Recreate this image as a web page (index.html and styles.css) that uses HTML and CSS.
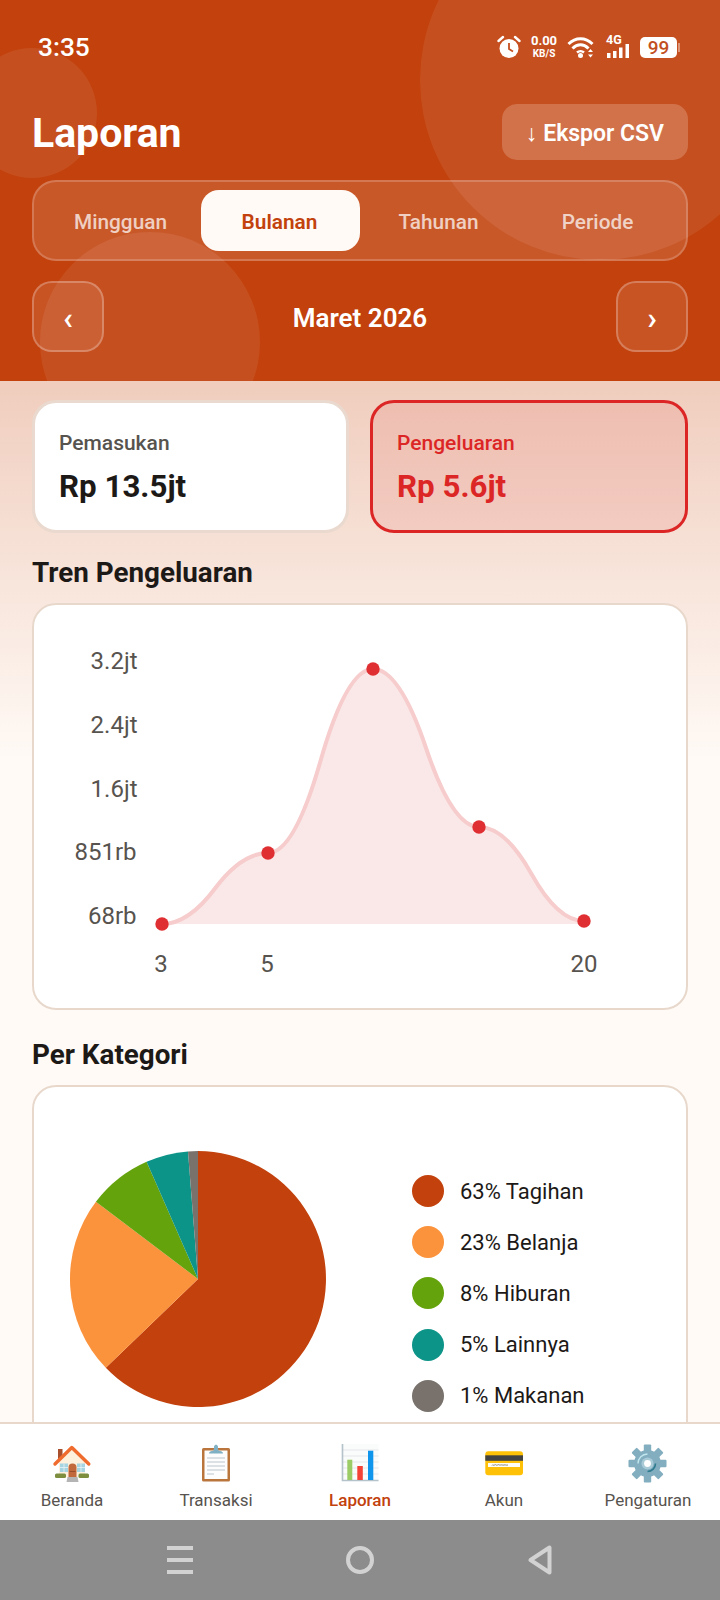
FILE: index.html
```html
<!DOCTYPE html>
<html lang="id">
<head>
    <meta charset="UTF-8">
    <meta name="viewport" content="width=device-width, initial-scale=1.0">
    <title>Laporan</title>
    <link rel="stylesheet" href="styles.css">
</head>
<body>
<div class="app">
    <!-- Header -->
    <header class="header">
        <span class="bubble bubble-big"></span>
        <span class="bubble bubble-left"></span>
        <span class="bubble bubble-low"></span>

        <div class="status">
            <span class="clock">3:35</span>
            <div class="status-icons">
                <svg class="ic-alarm" width="24" height="24" viewBox="0 0 24 24">
                    <circle cx="12" cy="13.5" r="9.5" fill="#fff"/>
                    <path d="M12 8v6l4 2.5" fill="none" stroke="#c64f1f" stroke-width="1.8"/>
                    <path d="M1.5 6 6 2M22.5 6 18 2" stroke="#fff" stroke-width="2.4" stroke-linecap="round"/>
                </svg>
                <div class="speed"><b>0.00</b><small>KB/S</small></div>
                <svg width="29" height="22" viewBox="0 0 29 22">
                    <path d="M1.5 8C8.5 1 18.5 1 25.500 8" fill="none" stroke="#fff" stroke-width="3"/>
                    <path d="M5.500 12.500C10.500 7.500 16.500 7.500 21.500 12.500" fill="none" stroke="#fff" stroke-width="3"/>
                    <path d="M10 16.500C12 14.800 15 14.800 17 16.500" fill="none" stroke="#fff" stroke-width="2.600"/>
                    <circle cx="13.500" cy="19.500" r="2.500" fill="#fff"/>
                    <path d="M23.500 13l2.500 3h-5zM23.500 21.500l-2.500-3h5z" fill="#fff"/>
                </svg>
                <div class="signal">
                    <span class="signal-net">4G</span>
                    <svg width="24" height="14" viewBox="0 0 24 14">
                        <rect x="1" y="9" width="3.500" height="5" fill="#fff"/>
                        <rect x="7" y="7" width="3.500" height="7" fill="#fff"/>
                        <rect x="13" y="3.500" width="3.500" height="10.500" fill="#fff"/>
                        <rect x="19.500" y="0" width="3.500" height="14" fill="#fff"/>
                    </svg>
                </div>
                <div class="battery"><span class="battery-level">99</span><i class="battery-nub"></i></div>
            </div>
        </div>

        <div class="title-row">
            <h1 class="title">Laporan</h1>
            <button class="export">↓ Ekspor CSV</button>
        </div>

        <div class="tabs">
            <span class="tab">Mingguan</span>
            <span class="tab active">Bulanan</span>
            <span class="tab">Tahunan</span>
            <span class="tab">Periode</span>
        </div>

        <div class="month-row">
            <button class="month-btn">‹</button>
            <span class="month">Maret 2026</span>
            <button class="month-btn">›</button>
        </div>
    </header>

    <!-- Isi laporan -->
    <main class="content">
        <div class="summary">
            <div class="sum-card">
                <div class="sum-label">Pemasukan</div>
                <div class="sum-value">Rp 13.5jt</div>
            </div>
            <div class="sum-card expense">
                <div class="sum-label">Pengeluaran</div>
                <div class="sum-value">Rp 5.6jt</div>
            </div>
        </div>

        <h2 class="section-title">Tren Pengeluaran</h2>
        <div class="panel panel-chart">
            <svg class="chart" width="652" height="403" viewBox="34 605 652 403">
                <path d="M162 924Q188.500 924 215 888.500Q241.500 853 268 853Q294.250 853 320.500 761Q346.750 669 373 669Q399.500 669 426 748Q452.500 827 479 827Q505.250 827 531.500 874Q557.750 921 584 921V924Z" fill="#fae8e8"/>
                <path d="M162 924Q188.500 924 215 888.500Q241.500 853 268 853Q294.250 853 320.500 761Q346.750 669 373 669Q399.500 669 426 748Q452.500 827 479 827Q505.250 827 531.500 874Q557.750 921 584 921" fill="none" stroke="#f6cccc" stroke-width="4"/>
                <g fill="#e02f33">
                    <circle cx="162" cy="924" r="6.700"/>
                    <circle cx="268" cy="853" r="6.700"/>
                    <circle cx="373" cy="669" r="6.700"/>
                    <circle cx="479" cy="827" r="6.700"/>
                    <circle cx="584" cy="921" r="6.700"/>
                </g>
                <g class="axis-y">
                    <text x="137.500" y="669">3.2jt</text>
                    <text x="137.500" y="733">2.4jt</text>
                    <text x="137.500" y="797">1.6jt</text>
                    <text x="136.500" y="860">851rb</text>
                    <text x="136.500" y="924">68rb</text>
                </g>
                <g class="axis-x">
                    <text x="161" y="972">3</text>
                    <text x="267" y="972">5</text>
                    <text x="584" y="972">20</text>
                </g>
            </svg>
        </div>

        <h2 class="section-title section-title-2">Per Kategori</h2>
        <div class="panel panel-pie">
            <svg class="pie" width="256" height="256" viewBox="70 1151 256 256">
                <path d="M198 1279V1151A128 128 0 1 1 105.800 1367.800Z" fill="#c2410c"/>
                <path d="M198 1279L105.800 1367.800A128 128 0 0 1 95.900 1201.800Z" fill="#fb923c"/>
                <path d="M198 1279L95.900 1201.800A128 128 0 0 1 146.600 1161.800Z" fill="#65a30d"/>
                <path d="M198 1279L146.600 1161.800A128 128 0 0 1 188 1151.400Z" fill="#0d9488"/>
                <path d="M198 1279L188 1151.400A128 128 0 0 1 198 1151Z" fill="#78716c"/>
            </svg>
            <ul class="legend">
                <li class="legend-row"><span class="dot dot-tagihan"></span>63% Tagihan</li>
                <li class="legend-row"><span class="dot dot-belanja"></span>23% Belanja</li>
                <li class="legend-row"><span class="dot dot-hiburan"></span>8% Hiburan</li>
                <li class="legend-row"><span class="dot dot-lainnya"></span>5% Lainnya</li>
                <li class="legend-row"><span class="dot dot-makanan"></span>1% Makanan</li>
            </ul>
        </div>
    </main>

    <!-- Navigasi bawah -->
    <nav class="bottom-nav">
        <div class="nav-item">
            <svg width="40" height="40" viewBox="0 0 40 40">
                <rect x="6" y="5" width="4.500" height="12" fill="#a8502e"/>
                <path d="M7 17 20 4l13 13v16H7z" fill="#fdf0dc"/>
                <path d="M3 20 19.800 3.500 36.800 20" fill="none" stroke="#ef6c2e" stroke-width="3.400" stroke-linecap="round" stroke-linejoin="round"/>
                <rect x="8" y="19.500" width="8" height="8.500" fill="#a6d4e0"/>
                <rect x="25" y="19.500" width="8" height="8.500" fill="#a6d4e0"/>
                <path d="M12 19.500v8.500M8 23.500h8M29 19.500v8.500M25 23.500h8" stroke="#e8f4f6" stroke-width="0.800"/>
                <path d="M16.500 33V23.500a4 4 0 0 1 8 0V33z" fill="#c1693c"/>
                <path d="M17.500 27.500h6" stroke="#8f4524" stroke-width="0.800"/>
                <rect x="3" y="29.500" width="11" height="4.500" rx="1.500" fill="#7d8f3f"/>
                <rect x="26.500" y="29.500" width="10.500" height="4.500" rx="1.500" fill="#7d8f3f"/>
                <path d="M15.500 33h10l1 5H14.500z" fill="#b4b4b4"/>
            </svg>
            <span class="nav-label">Beranda</span>
        </div>
        <div class="nav-item">
            <svg width="40" height="40" viewBox="0 0 40 40">
                <rect x="6" y="4" width="28" height="33.500" rx="1.500" fill="#b9753c"/>
                <rect x="8.500" y="6.500" width="23" height="28.500" fill="#fdfdfd"/>
                <path d="M13 9.500c0-2 2-2.500 4.500-2.800C17.800 5 18.800 0.500 20 0.500s2.200 4.500 2.500 6.200C25 7 27 7.500 27 9.500z" fill="#7fb0c4"/>
                <circle cx="20" cy="3" r="2" fill="#7fb0c4"/>
                <path d="M11 14h18M11 18h18M11 22h18M11 26h18M11 30h7" stroke="#cfd8dc" stroke-width="1.300"/>
            </svg>
            <span class="nav-label">Transaksi</span>
        </div>
        <div class="nav-item active">
            <svg width="40" height="40" viewBox="0 0 40 40">
                <rect x="1.500" y="0" width="37" height="37" fill="#fafbfb"/>
                <path d="M3 6h35.500M3 12h35.500M3 18h35.500M3 24h35.500M3 30h35.500" stroke="#e3e8ea" stroke-width="1.200"/>
                <path d="M2.500 0v36.500h36" fill="none" stroke="#b4c2c9" stroke-width="1.600"/>
                <rect x="7.300" y="15.700" width="5" height="20.300" fill="#9ccc65"/>
                <rect x="17.300" y="22" width="5.500" height="14" fill="#f44336"/>
                <rect x="28" y="6.700" width="5.300" height="29.300" fill="#0f96ec"/>
            </svg>
            <span class="nav-label">Laporan</span>
        </div>
        <div class="nav-item">
            <svg width="40" height="40" viewBox="0 0 40 40">
                <rect x="1.300" y="7.300" width="37.700" height="24" rx="3" fill="#ffc107"/>
                <rect x="1.300" y="11.300" width="37.700" height="5.500" fill="#424242"/>
                <rect x="4" y="19" width="32" height="4" fill="#fffdf5"/>
                <path d="M8 21.500c1-2 1.500 1 2.500-.5s1.500 1 3 0 1.500.5 3 0 2 .5 3.500 0 2 .5 4 0" fill="none" stroke="#555" stroke-width="0.700"/>
            </svg>
            <span class="nav-label">Akun</span>
        </div>
        <div class="nav-item">
            <svg width="40" height="40" viewBox="0 0 40 40">
                <g fill="#82aec0">
                    <circle cx="19.500" cy="19.500" r="13.500"/>
                    <rect x="15.800" y="0.500" width="7.400" height="38" rx="1"/>
                    <rect x="15.800" y="0.500" width="7.400" height="38" rx="1" transform="rotate(45 19.500 19.500)"/>
                    <rect x="15.800" y="0.500" width="7.400" height="38" rx="1" transform="rotate(90 19.500 19.500)"/>
                    <rect x="15.800" y="0.500" width="7.400" height="38" rx="1" transform="rotate(135 19.500 19.500)"/>
                </g>
                <path d="M10 19.500A9.500 9.500 0 0 1 19.500 10" fill="none" stroke="#c2e6ee" stroke-width="1.400"/>
                <path d="M27.500 19.500A8 8 0 0 1 19.500 27.500" fill="none" stroke="#2f7a8e" stroke-width="1.600"/>
                <circle cx="19.500" cy="19.500" r="6" fill="#a9cbd8"/>
                <circle cx="19.500" cy="19.500" r="3.400" fill="#fff"/>
            </svg>
            <span class="nav-label">Pengaturan</span>
        </div>
    </nav>

    <!-- Tombol sistem -->
    <div class="sysbar">
        <svg width="26" height="28" viewBox="0 0 26 28">
            <path d="M0 2h26M0 14h26M0 26h26" stroke="#d2d2d2" stroke-width="4"/>
        </svg>
        <svg width="28" height="28" viewBox="0 0 28 28">
            <circle cx="14" cy="14" r="12" fill="none" stroke="#d2d2d2" stroke-width="4"/>
        </svg>
        <svg width="24" height="30" viewBox="0 0 24 30">
            <path d="M21.500 2.500v25L2.500 15z" fill="none" stroke="#d2d2d2" stroke-width="4" stroke-linejoin="round"/>
        </svg>
    </div>
</div>
</body>
</html>
```

FILE: styles.css
```css
* {
    box-sizing: border-box;
}
body {
    margin: 0;
    font-family: "Roboto", "Liberation Sans", sans-serif;
    color: #1c1917;
}
button {
    font-family: inherit;
    color: #fff;
    cursor: pointer;
}
.app {
    width: 720px;
    height: 1600px;
    display: flex;
    flex-direction: column;
    overflow: hidden;
    background: #fffaf6;
}

/* Header */
.header {
    position: relative;
    isolation: isolate;
    flex: none;
    height: 381px;
    background: #c2410c;
    overflow: hidden;
    color: #fff;
}
.bubble {
    position: absolute;
    z-index: -1;
    border-radius: 50%;
    background: rgba(255, 255, 255, 0.08);
}
.bubble-big {
    width: 360px;
    height: 360px;
    top: -100px;
    left: 420px;
}
.bubble-left {
    width: 130px;
    height: 130px;
    top: 48px;
    left: -33px;
}
.bubble-low {
    width: 220px;
    height: 220px;
    top: 232px;
    left: 40px;
}
.status {
    height: 94px;
    margin-bottom: 10px;
    padding: 0 40px 0 38px;
    display: flex;
    justify-content: space-between;
    align-items: center;
}
.clock {
    font-size: 26.300px;
    font-weight: 500;
}
.status-icons {
    display: flex;
    align-items: center;
    gap: 10px;
}
.speed {
    width: 26px;
    margin-top: -2px;
    display: flex;
    flex-direction: column;
    align-items: center;
}
.speed b {
    font-size: 13px;
    line-height: 13px;
}
.speed small {
    margin-top: 1px;
    font-size: 10px;
    font-weight: 700;
    line-height: 11px;
}
.signal {
    width: 24px;
    height: 22px;
    display: flex;
    flex-direction: column;
}
.signal-net {
    font-size: 12.500px;
    font-weight: 700;
    line-height: 8px;
}
.battery {
    position: relative;
    width: 37px;
    height: 21px;
    margin-right: 3px;
    border-radius: 5px;
    background: #fff;
    display: flex;
    justify-content: center;
    align-items: center;
}
.battery-level {
    color: #c2501f;
    font-size: 19px;
    font-weight: 500;
}
.battery-nub {
    position: absolute;
    right: -3px;
    top: 6px;
    width: 2px;
    height: 9px;
    background: rgba(255, 255, 255, 0.4);
}
.title-row {
    height: 56px;
    padding: 0 32px;
    display: flex;
    justify-content: space-between;
    align-items: center;
}
.title {
    margin: 0;
    padding-top: 2px;
    font-size: 41px;
    font-weight: 700;
}
.export {
    width: 186px;
    height: 56px;
    padding: 2px 0 0;
    border: none;
    border-radius: 15px;
    background: rgba(255, 255, 255, 0.2);
    font-size: 23px;
    font-weight: 600;
}
.tabs {
    margin: 20px 32px 0;
    padding: 8px;
    height: 81px;
    border: 2px solid rgba(255, 255, 255, 0.2);
    border-radius: 24px;
    background: rgba(255, 255, 255, 0.12);
    display: grid;
    grid-template-columns: repeat(4, 1fr);
}
.tab {
    padding: 2px 2px 0 0;
    display: flex;
    justify-content: center;
    align-items: center;
    border-radius: 18px;
    font-size: 20.800px;
    font-weight: 500;
    color: rgba(255, 255, 255, 0.72);
}
.tab.active {
    background: #fffaf6;
    color: #c2410c;
    font-weight: 600;
}
.month-row {
    margin: 20px 32px 0;
    display: flex;
    justify-content: space-between;
    align-items: center;
}
.month-btn {
    width: 72px;
    height: 71px;
    padding: 3px 0 0;
    border: 2px solid rgba(255, 255, 255, 0.25);
    border-radius: 20px;
    background: rgba(255, 255, 255, 0.1);
    font-size: 32px;
    font-weight: 600;
}
.month {
    padding-top: 2px;
    font-size: 26px;
    font-weight: 600;
}

/* Isi */
.content {
    flex: 1;
    min-height: 0;
    overflow: hidden;
    padding: 19px 32px 0;
    background: linear-gradient(#f0cdbd 0, #fffaf6 380px);
}
.summary {
    display: grid;
    grid-template-columns: 317px 318px;
    gap: 21px;
}
.sum-card {
    height: 133px;
    padding: 20px 24px;
    border: 3px solid #ead9ce;
    border-radius: 24px;
    background: #fff;
}
.sum-card.expense {
    border-color: #dc2626;
    background: rgba(220, 38, 38, 0.1);
    color: #dc2626;
}
.sum-label {
    font-size: 21px;
    font-weight: 500;
    line-height: 40px;
    color: #57534e;
}
.expense .sum-label {
    color: #dc2626;
}
.sum-value {
    font-size: 31.300px;
    font-weight: 700;
    line-height: 47px;
}
.section-title {
    margin: 23px 0 13px;
    font-size: 27.800px;
    font-weight: 700;
    line-height: 34px;
}
.section-title-2 {
    margin-top: 28px;
}
.panel {
    border: 2px solid #e8d8cc;
    border-radius: 24px;
    background: #fff;
}
.panel-chart {
    height: 407px;
}
.chart {
    display: block;
}
.chart text {
    font-size: 24px;
    fill: #57534e;
}
.axis-y {
    text-anchor: end;
}
.axis-x {
    text-anchor: middle;
}
.panel-pie {
    height: 480px;
    padding: 64px 0 0 36px;
    display: flex;
    align-items: flex-start;
}
.pie {
    flex: none;
}
.legend {
    margin: 24px 0 0 86px;
    padding: 0;
    list-style: none;
    display: flex;
    flex-direction: column;
    gap: 19.2px;
}
.legend-row {
    height: 32px;
    display: flex;
    align-items: center;
    gap: 16px;
    font-size: 22px;
}
.dot {
    width: 32px;
    height: 32px;
    border-radius: 50%;
}
.dot-tagihan { background: #c2410c; }
.dot-belanja { background: #fb923c; }
.dot-hiburan { background: #65a30d; }
.dot-lainnya { background: #0d9488; }
.dot-makanan { background: #78716c; }

/* Navigasi bawah */
.bottom-nav {
    flex: none;
    height: 98px;
    padding-top: 20px;
    border-top: 2px solid #e8d8cc;
    background: #fff;
    display: grid;
    grid-template-columns: repeat(5, 1fr);
}
.nav-item {
    display: flex;
    flex-direction: column;
    align-items: center;
    gap: 6px;
    color: #57534e;
}
.nav-label {
    font-size: 17px;
    font-weight: 450;
    line-height: 20px;
}
.nav-item.active {
    color: #c2410c;
}
.nav-item.active .nav-label {
    font-weight: 500;
}
.sysbar {
    flex: none;
    height: 80px;
    background: #8c8c8c;
    display: grid;
    grid-template-columns: 180px 180px 180px;
    justify-content: center;
    justify-items: center;
    align-items: center;
}
```
